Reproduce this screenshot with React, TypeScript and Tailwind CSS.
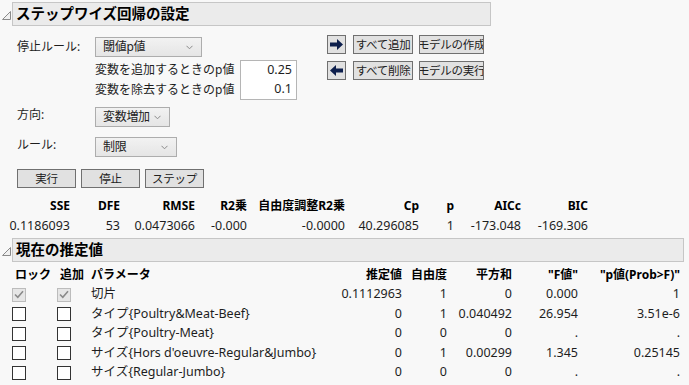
import React from "react";

const font = { fontFamily: '"Noto Sans", "Noto Sans CJK JP", sans-serif' };

function Tri() {
  return (
    <svg width="9" height="9" viewBox="0 0 9 9" className="shrink-0">
      <path d="M8.5 0.5 L8.5 8.5 L0.5 8.5 Z" fill="#f0f0f0" stroke="#8a8a8a" strokeWidth="1" />
    </svg>
  );
}

function Chevron() {
  return (
    <svg width="7" height="5" viewBox="0 0 7 5" className="shrink-0">
      <path d="M0.5 0.8 L3.5 3.8 L6.5 0.8" fill="none" stroke="#8a8a8a" strokeWidth="1" />
    </svg>
  );
}

function Dropdown({ label, w }: { label: string; w: string }) {
  return (
    <div
      className={`${w} h-[20px] flex items-center justify-between pl-[7px] pr-[8px] border border-[#adadad] bg-gradient-to-b from-[#f2f2f2] to-[#e5e5e5] text-[12px] text-[#222] whitespace-nowrap`}
    >
      <span className="tracking-[-0.3px]">{label}</span>
      <Chevron />
    </div>
  );
}

function Btn({ label, w }: { label: string; w: string }) {
  return (
    <div
      className={`${w} h-[19px] flex items-center justify-center border border-[#707070] bg-[#e1e1e1] text-[11.5px] tracking-[-0.3px] text-[#222] whitespace-nowrap overflow-hidden`}
    >
      {label}
    </div>
  );
}

function ArrowBtn({ dir }: { dir: "r" | "l" }) {
  return (
    <div className="w-[19px] h-[19px] flex items-center justify-center border border-[#707070] bg-[#e1e1e1]">
      <svg width="13" height="11" viewBox="0 0 13 11">
        {dir === "r" ? (
          <path d="M0 3.5 H7 V0 L13 5.5 L7 11 V7.5 H0 Z" fill="#0d1f4d" />
        ) : (
          <path d="M13 3.5 H6 V0 L0 5.5 L6 11 V7.5 H13 Z" fill="#0d1f4d" />
        )}
      </svg>
    </div>
  );
}

function Check({ checked }: { checked?: boolean }) {
  return (
    <div
      className={`w-[14px] h-[14px] border flex items-center justify-center ${
        checked ? "border-[#bcbcbc] bg-[#e6e6e6]" : "border-[#333] bg-white"
      }`}
    >
      {checked && (
        <svg width="10" height="9" viewBox="0 0 10 9">
          <path d="M1 4.5 L3.8 7.3 L9 1.2" fill="none" stroke="#8a8a8a" strokeWidth="1.6" />
        </svg>
      )}
    </div>
  );
}

const statCols = ["w-[70px]", "w-[50px]", "w-[75px]", "w-[52px]", "w-[98px]", "w-[74px]", "w-[35px]", "w-[67px]", "w-[67px]"];
const statHead = ["SSE", "DFE", "RMSE", "R2乗", "自由度調整R2乗", "Cp", "p", "AICc", "BIC"];
const statVal = ["0.1186093", "53", "0.0473066", "-0.000", "-0.0000", "40.296085", "1", "-173.048", "-169.306"];

const rows = [
  { checked: true, p: "切片", e: "0.1112963", df: "1", ss: "0", f: "0.000", pv: "1" },
  { p: "タイプ{Poultry&Meat-Beef}", e: "0", df: "1", ss: "0.040492", f: "26.954", pv: "3.51e-6" },
  { p: "タイプ{Poultry-Meat}", e: "0", df: "0", ss: "0", f: ".", pv: "." },
  { p: "サイズ{Hors d'oeuvre-Regular&Jumbo}", e: "0", df: "1", ss: "0.00299", f: "1.345", pv: "0.25145" },
  { p: "サイズ{Regular-Jumbo}", e: "0", df: "0", ss: "0", f: ".", pv: "." },
];

export default function App() {
  return (
    <div className="w-[689px] h-[385px] overflow-hidden bg-[#f8f8f8] text-[#1e1e1e] text-[12px] whitespace-nowrap" style={font}>
      {/* Header 1 */}
      <div className="flex items-center pt-[2px] pl-[2px]">
        <div className="w-[10px] flex items-center mt-[2px]"><Tri /></div>
        <div className="w-[479px] h-[24px] border border-[#c6c6c6] bg-[#ebebeb] flex items-center pl-[3px] text-[14.5px] font-bold text-black">
          ステップワイズ回帰の設定
        </div>
      </div>

      {/* Settings */}
      <div className="flex pl-[17px]">
        <div className="w-[280px] flex flex-col">
          <div className="flex items-center mt-[11px] h-[20px]">
            <span className="w-[78px]">停止ルール:</span>
            <Dropdown label="閾値p値" w="w-[107px]" />
          </div>
          <div className="flex items-center mt-[3px] h-[20px]">
            <span className="ml-[78px] w-[145px]">変数を追加するときのp値</span>
            <div className="w-[57px] h-[21px] border border-[#b5b5b5] bg-white flex items-center justify-end pr-[4px] text-[12.5px]">0.25</div>
          </div>
          <div className="flex items-center h-[20px]">
            <span className="ml-[78px] w-[145px]">変数を除去するときのp値</span>
            <div className="w-[57px] h-[20px] border border-[#b5b5b5] border-t-0 bg-white flex items-center justify-end pr-[4px] text-[12.5px]">0.1</div>
          </div>
          <div className="flex items-center mt-[7px] h-[20px]">
            <span className="w-[78px] -mt-[4px]">方向:</span>
            <Dropdown label="変数増加" w="w-[75px]" />
          </div>
          <div className="flex items-center mt-[10px] h-[20px]">
            <span className="w-[78px] -mt-[4px]">ルール:</span>
            <Dropdown label="制限" w="w-[82px]" />
          </div>
          <div className="flex items-center gap-[5px] mt-[12px]">
            <Btn label="実行" w="w-[59px]" />
            <Btn label="停止" w="w-[59px]" />
            <Btn label="ステップ" w="w-[59px]" />
          </div>
        </div>
        <div className="ml-[30px] mt-[9px] flex flex-col gap-[7px]">
          <div className="flex items-center gap-[7px]">
            <ArrowBtn dir="r" />
            <div className="flex items-center gap-[6px]">
              <Btn label="すべて追加" w="w-[60px]" />
              <Btn label="モデルの作成" w="w-[65px]" />
            </div>
          </div>
          <div className="flex items-center gap-[7px]">
            <ArrowBtn dir="l" />
            <div className="flex items-center gap-[6px]">
              <Btn label="すべて削除" w="w-[60px]" />
              <Btn label="モデルの実行" w="w-[65px]" />
            </div>
          </div>
        </div>
      </div>

      {/* Stats */}
      <div className="mt-[7px] flex font-bold text-black h-[21px] items-center">
        {statHead.map((h, i) => (
          <div key={h} className={`${statCols[i]} text-right`}>{h}</div>
        ))}
      </div>
      <div className="flex h-[21px] items-center text-[12.5px]">
        {statVal.map((v, i) => (
          <div key={i} className={`${statCols[i]} text-right`}>{v}</div>
        ))}
      </div>

      {/* Header 2 */}
      <div className="flex items-center mt-[1px] pl-[2px]">
        <div className="w-[10px] flex items-center mt-[2px]"><Tri /></div>
        <div className="w-[672px] h-[24px] border border-[#c6c6c6] bg-[#ebebeb] flex items-center pl-[3px] text-[14.5px] font-bold text-black">
          現在の推定値
        </div>
      </div>

      {/* Table */}
      <div className="pl-[12px] mt-[3px]">
        <div className="flex items-center h-[20px] font-bold text-black">
          <div className="w-[45px] pl-[3px]">ロック</div>
          <div className="w-[34px] pl-[3px]">追加</div>
          <div className="w-[235px]">パラメータ</div>
          <div className="w-[76px] text-right">推定値</div>
          <div className="w-[45px] text-right">自由度</div>
          <div className="w-[65px] text-right">平方和</div>
          <div className="w-[66px] text-right">"F値"</div>
          <div className="w-[102px] text-right">"p値(Prob&gt;F)"</div>
        </div>
        {rows.map((r, i) => (
          <div key={i} className="flex items-center h-[19.5px] text-[12.5px]">
            <div className="w-[45px]"><Check checked={r.checked} /></div>
            <div className="w-[34px]"><Check checked={r.checked} /></div>
            <div className="w-[235px]">{r.p}</div>
            <div className="w-[76px] text-right">{r.e}</div>
            <div className="w-[45px] text-right">{r.df}</div>
            <div className="w-[65px] text-right">{r.ss}</div>
            <div className="w-[66px] text-right">{r.f}</div>
            <div className="w-[102px] text-right">{r.pv}</div>
          </div>
        ))}
      </div>
    </div>
  );
}
